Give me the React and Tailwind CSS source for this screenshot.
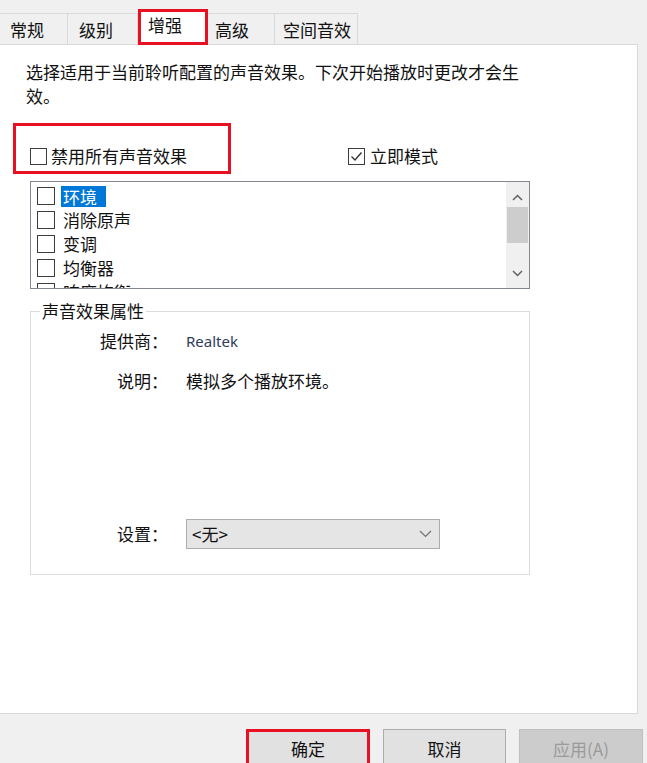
import React from "react";

const Box = ({ checked, big }) => (
  <span
    className={
      big
        ? "w-[18px] h-[18px] border border-[#3c3c3c] bg-white flex items-center justify-center shrink-0"
        : "w-[17px] h-[17px] border border-[#3c3c3c] bg-white flex items-center justify-center shrink-0"
    }
  >
    {checked && (
      <svg width="13" height="11" viewBox="0 0 13 11">
        <path d="M1.5 5.5 L5 9 L11.5 1.5" stroke="#333" strokeWidth="1.4" fill="none" />
      </svg>
    )}
  </span>
);

const ChevUp = () => (
  <svg width="11" height="7" viewBox="0 0 11 7">
    <path d="M1 6 L5.5 1.5 L10 6" stroke="#606060" strokeWidth="1.5" fill="none" />
  </svg>
);
const ChevDown = () => (
  <svg width="11" height="7" viewBox="0 0 11 7">
    <path d="M1 1 L5.5 5.5 L10 1" stroke="#606060" strokeWidth="1.5" fill="none" />
  </svg>
);

const tabs = [
  { label: "常规", cls: "w-[68px] pl-[10px]" },
  { label: "级别", cls: "w-[70px] pl-[11px]" },
  { label: "增强", sel: true },
  { label: "高级", cls: "w-[67px] pl-[7px]" },
  { label: "空间音效", cls: "w-[83px] pl-[8px]" },
];

const items = ["环境", "消除原声", "变调", "均衡器", "响度均衡"];

export default function App() {
  return (
    <div className="w-[647px] h-[763px] overflow-hidden bg-[#f0f0f0] flex flex-col text-[#111] font-['Noto_Sans_CJK_SC',sans-serif] text-[17px] leading-[24px]">
      {/* Tabs */}
      <div className="h-[44px] shrink-0 flex items-end">
        {tabs.map((t) =>
          t.sel ? (
            <div
              key={t.label}
              className="relative z-10 w-[70px] h-[36px] mb-[-1px] bg-white border-[3px] border-[#e81123] pl-[7px] pt-[1px]"
            >
              {t.label}
            </div>
          ) : (
            <div
              key={t.label}
              className={"h-[31px] pt-[4px] bg-[#f0f0f0] border-t border-r border-[#d9d9d9] " + t.cls}
            >
              {t.label}
            </div>
          )
        )}
      </div>

      {/* Panel */}
      <div className="h-[670px] shrink-0 w-[638px] bg-white border-t border-r border-b border-[#d9d9d9] flex flex-col">
        <p className="ml-[26px] mt-[15px] w-[505px]">
          选择适用于当前聆听配置的声音效果。下次开始播放时更改才会生效。
        </p>

        <div className="mt-[15px] h-[51px] flex items-end">
          <div className="ml-[13px] w-[218px] h-full border-[3px] border-[#e81123] flex items-end pl-[14px] pb-[3px]">
            <label className="h-[24px] flex items-center gap-[4px]">
              <Box />
              <span>禁用所有声音效果</span>
            </label>
          </div>
          <label className="ml-[117px] mb-[6px] h-[24px] flex items-center gap-[5px]">
            <Box checked />
            <span>立即模式</span>
          </label>
        </div>

        {/* List box */}
        <div className="ml-[30px] mt-[7px] w-[500px] h-[108px] border border-[#828790] flex">
          <div className="flex-1 overflow-hidden pl-[6px] pt-[2px]">
            {items.map((it, i) => (
              <div key={it} className="h-[24px] flex items-center gap-[6px]">
                <Box big />
                <span
                  className={
                    i === 0
                      ? "h-[21px] leading-[21px] pl-[2px] pr-[9px] bg-[#0078d7] text-white"
                      : "pl-[2px]"
                  }
                >
                  {it}
                </span>
              </div>
            ))}
          </div>
          <div className="w-[23px] bg-[#f0f0f0] flex flex-col items-center">
            <div className="h-[25px] w-full flex items-center justify-center pt-[6px]">
              <ChevUp />
            </div>
            <div className="w-[21px] h-[36px] bg-[#cdcdcd]" />
            <div className="flex-1" />
            <div className="h-[25px] w-full flex items-center justify-center pb-[4px]">
              <ChevDown />
            </div>
          </div>
        </div>

        {/* Group box */}
        <fieldset className="ml-[30px] mt-[10px] w-[500px] border border-[#dcdcdc]">
          <legend className="ml-[9px] px-[2px] leading-[24px]">声音效果属性</legend>
          <div className="mt-[6px] flex items-center h-[24px]">
            <span className="w-[137px] text-right">提供商：</span>
            <span className="ml-[18px] font-['Noto_Sans',sans-serif] text-[15px] text-[#2f3b5c]">Realtek</span>
          </div>
          <div className="mt-[16px] flex items-center h-[24px]">
            <span className="w-[137px] text-right">说明：</span>
            <span className="ml-[18px]">模拟多个播放环境。</span>
          </div>
          <div className="mt-[126px] mb-[25px] flex items-center h-[30px]">
            <span className="w-[137px] text-right">设置：</span>
            <div className="ml-[18px] w-[254px] h-[30px] bg-[#e5e5e5] border border-[#adadad] flex items-center pl-[5px] pr-[7px]">
              <span className="flex-1">&lt;无&gt;</span>
              <svg width="13" height="8" viewBox="0 0 13 8">
                <path d="M1 1 L6.5 6.5 L12 1" stroke="#707070" strokeWidth="1.2" fill="none" />
              </svg>
            </div>
          </div>
        </fieldset>
      </div>

      {/* Buttons */}
      <div className="flex pl-[246px] pt-[15px] gap-[13px]">
        <div className="w-[124px] h-[40px] shrink-0 bg-[#e1e1e1] border-[3px] border-[#e81123] flex items-center justify-center">
          确定
        </div>
        <div className="w-[123px] h-[40px] shrink-0 bg-[#e1e1e1] border border-[#adadad] flex items-center justify-center">
          取消
        </div>
        <div className="w-[124px] h-[40px] shrink-0 bg-[#cccccc] border border-[#bfbfbf] text-[#9a9a9a] flex items-center justify-center">
          应用(A)
        </div>
      </div>
    </div>
  );
}
